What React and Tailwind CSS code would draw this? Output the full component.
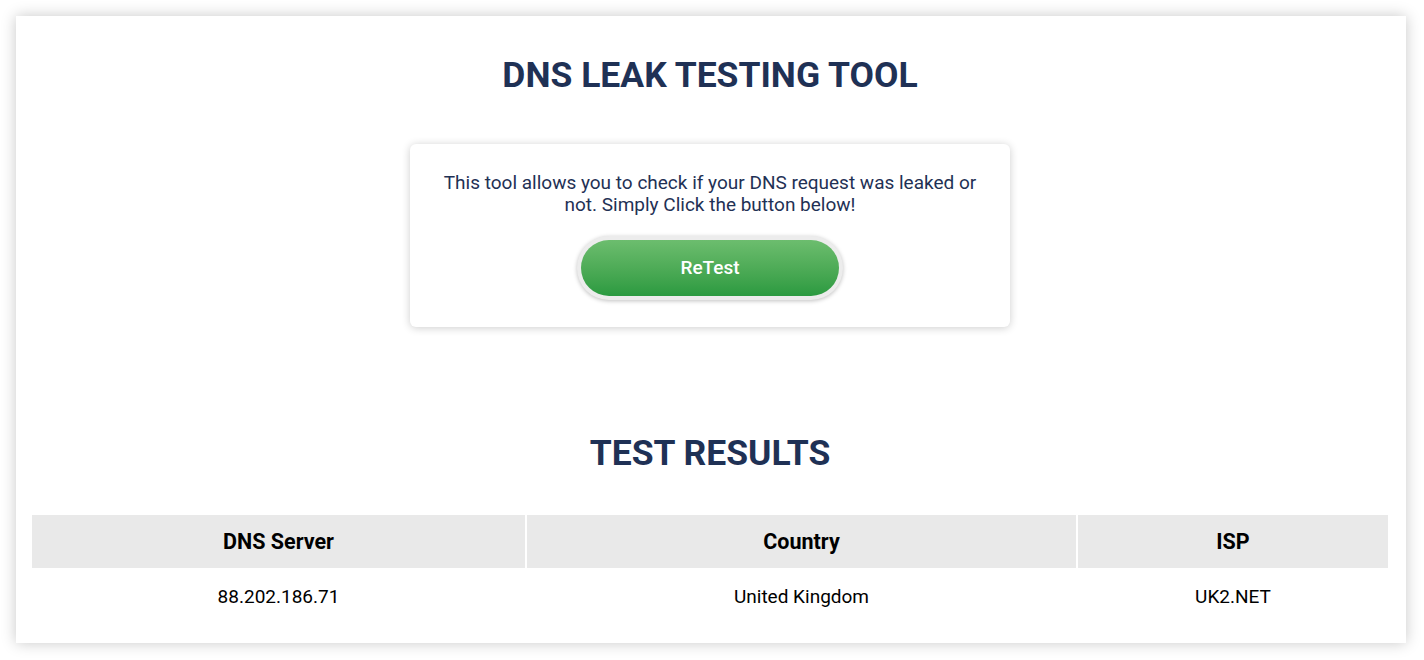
export default function App() {
  const rows = [{ server: "88.202.186.71", country: "United Kingdom", isp: "UK2.NET" }];

  return (
    <div className="min-h-screen bg-white pt-4 pb-4 pl-4 pr-[18px]" style={{ fontFamily: "Roboto, 'Liberation Sans', sans-serif" }}>
      <div className="bg-white shadow-[0_0_14px_rgba(0,0,0,0.22)] pl-4 pr-[18px] pt-[37px] pb-5">
        <h1 className="text-center text-[35.5px] leading-[44px] font-bold text-[#1f3155]">DNS LEAK TESTING TOOL</h1>

        <div className="mx-auto mt-[47px] w-[600px] rounded-md bg-white shadow-[0_1px_8px_rgba(0,0,0,0.2)] px-6 pt-[28px] pb-[27px] text-center">
          <p className="text-[19px] leading-[22px] text-[#1f3155]">
            This tool allows you to check if your DNS request was leaked or not. Simply Click the button below!
          </p>
          <button className="mt-[20px] inline-flex rounded-full bg-[#ececec] p-[4px] shadow-[0_1px_4px_rgba(0,0,0,0.25)]">
            <span className="flex h-[56px] w-[258px] items-center justify-center rounded-full bg-gradient-to-b from-[#6cbd6e] to-[#2a9a40] text-[19px] font-medium text-white">
              ReTest
            </span>
          </button>
        </div>

        <h2 className="mt-[104px] text-center text-[35.5px] leading-[44px] font-bold text-[#1f3155]">TEST RESULTS</h2>

        <div className="mt-[40px]">
          <div className="grid grid-cols-[493px_549px_1fr] gap-x-[2px]">
            <div className="flex h-[53px] items-center justify-center pt-[2px] bg-[#e9e9e9] text-[21.5px] font-bold text-black">DNS Server</div>
            <div className="flex h-[53px] items-center justify-center pt-[2px] bg-[#e9e9e9] text-[21.5px] font-bold text-black">Country</div>
            <div className="flex h-[53px] items-center justify-center pt-[2px] bg-[#e9e9e9] text-[21.5px] font-bold text-black">ISP</div>
          </div>
          {rows.map((r) => (
            <div key={r.server} className="grid grid-cols-[493px_549px_1fr] gap-x-[2px]">
              <div className="flex h-[55px] items-center justify-center pt-[4px] text-[19px] text-black">{r.server}</div>
              <div className="flex h-[55px] items-center justify-center pt-[4px] text-[19px] text-black">{r.country}</div>
              <div className="flex h-[55px] items-center justify-center pt-[4px] text-[19px] text-black">{r.isp}</div>
            </div>
          ))}
        </div>
      </div>
    </div>
  );
}
